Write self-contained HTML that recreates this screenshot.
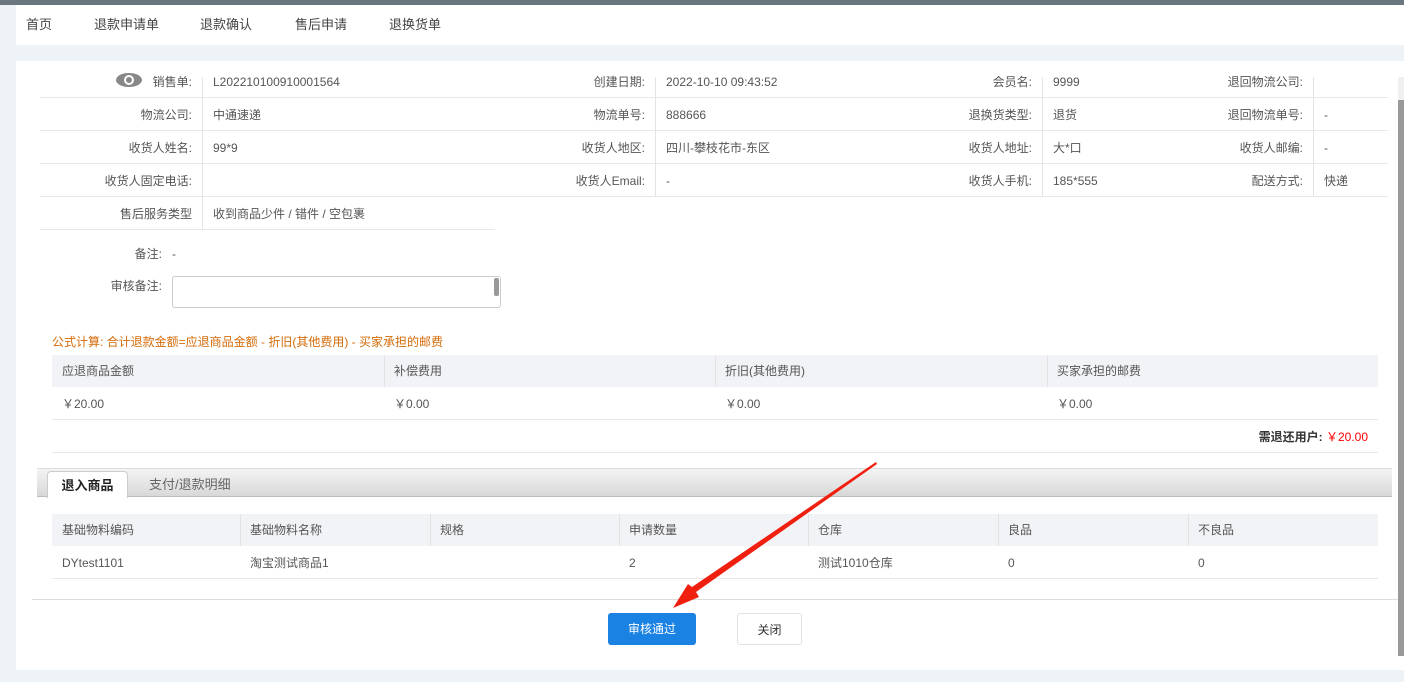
<!DOCTYPE html>
<html><head><meta charset="utf-8"><style>
*{margin:0;padding:0;box-sizing:border-box}
body{width:1404px;height:682px;overflow:hidden;background:#edf3f7;font-family:"Liberation Sans","Noto Sans CJK SC",sans-serif;font-size:12px;color:#555;position:relative}
.a{position:absolute;white-space:nowrap;line-height:16px}
.t{height:16px;line-height:16px}
.l{text-align:right}
.hl{position:absolute;height:1px;background:#e8e8e8}
.vl{position:absolute;width:1px;background:#e3e3e3}
</style></head><body>
<div class="a" style="left:0;top:0;width:1404px;height:5px;background:#6b777f"></div>
<div class="a" style="left:16px;top:5px;width:1388px;height:40px;background:#fff"></div>
<div class="a" style="left:26px;top:17px;font-size:13px;color:#444">首页</div>
<div class="a" style="left:94px;top:17px;font-size:13px;color:#444">退款申请单</div>
<div class="a" style="left:200px;top:17px;font-size:13px;color:#444">退款确认</div>
<div class="a" style="left:295px;top:17px;font-size:13px;color:#444">售后申请</div>
<div class="a" style="left:389px;top:17px;font-size:13px;color:#444">退换货单</div>
<div class="a" style="left:16px;top:61px;width:1388px;height:609px;background:#fff"></div>
<div class="a" style="left:1398px;top:77px;width:6px;height:579px;background:#f0f0f0"></div>
<div class="a" style="left:1398px;top:100px;width:6px;height:556px;background:#999"></div>

<div class="hl" style="left:40px;top:97px;width:1348px"></div>
<div class="hl" style="left:40px;top:130px;width:1348px"></div>
<div class="hl" style="left:40px;top:163px;width:1348px"></div>
<div class="hl" style="left:40px;top:196px;width:1348px"></div>
<div class="hl" style="left:40px;top:229px;width:455px"></div>
<div class="vl" style="left:202px;top:77px;height:152px"></div>
<div class="vl" style="left:655px;top:77px;height:119px"></div>
<div class="vl" style="left:1042px;top:77px;height:119px"></div>
<div class="vl" style="left:1313px;top:77px;height:119px"></div>
<div class="a" style="left:116px;top:73px;width:26px;height:14px;border-radius:50%;background:#888"></div>
<div class="a" style="left:124px;top:75px;width:10px;height:10px;border-radius:50%;background:#fff"></div>
<div class="a" style="left:126px;top:77px;width:6px;height:6px;border-radius:50%;background:#888"></div>

<div class="a l" style="right:1212px;top:74px">销售单:</div><div class="a" style="left:213px;top:74px">L202210100910001564</div>
<div class="a l" style="right:759px;top:74px">创建日期:</div><div class="a" style="left:666px;top:74px">2022-10-10 09:43:52</div>
<div class="a l" style="right:372px;top:74px">会员名:</div><div class="a" style="left:1053px;top:74px">9999</div>
<div class="a l" style="right:101px;top:74px">退回物流公司:</div>

<div class="a l" style="right:1212px;top:107px">物流公司:</div><div class="a" style="left:213px;top:107px">中通速递</div>
<div class="a l" style="right:759px;top:107px">物流单号:</div><div class="a" style="left:666px;top:107px">888666</div>
<div class="a l" style="right:372px;top:107px">退换货类型:</div><div class="a" style="left:1053px;top:107px">退货</div>
<div class="a l" style="right:101px;top:107px">退回物流单号:</div><div class="a" style="left:1324px;top:107px">-</div>

<div class="a l" style="right:1212px;top:140px">收货人姓名:</div><div class="a" style="left:213px;top:140px">99*9</div>
<div class="a l" style="right:759px;top:140px">收货人地区:</div><div class="a" style="left:666px;top:140px">四川-攀枝花市-东区</div>
<div class="a l" style="right:372px;top:140px">收货人地址:</div><div class="a" style="left:1053px;top:140px">大*口</div>
<div class="a l" style="right:101px;top:140px">收货人邮编:</div><div class="a" style="left:1324px;top:140px">-</div>

<div class="a l" style="right:1212px;top:173px">收货人固定电话:</div>
<div class="a l" style="right:759px;top:173px">收货人Email:</div><div class="a" style="left:666px;top:173px">-</div>
<div class="a l" style="right:372px;top:173px">收货人手机:</div><div class="a" style="left:1053px;top:173px">185*555</div>
<div class="a l" style="right:101px;top:173px">配送方式:</div><div class="a" style="left:1324px;top:173px">快递</div>

<div class="a l" style="right:1212px;top:206px">售后服务类型</div><div class="a" style="left:213px;top:206px">收到商品少件 / 错件 / 空包裹</div>

<div class="a l" style="right:1242px;top:246px">备注:</div><div class="a" style="left:172px;top:246px">-</div>
<div class="a l" style="right:1242px;top:278px">审核备注:</div>
<div class="a" style="left:172px;top:276px;width:329px;height:32px;border:1px solid #ccc;border-radius:3px"></div>
<div class="a" style="left:494px;top:278px;width:5px;height:18px;background:#999;border-radius:2px"></div>

<div class="a" style="left:52px;top:334px;color:#d46b08">公式计算: 合计退款金额=应退商品金额 - 折旧(其他费用) - 买家承担的邮费</div>
<div class="a" style="left:52px;top:355px;width:1326px;height:32px;background:#f2f3f6"></div>
<div class="vl" style="left:384px;top:355px;height:32px"></div>
<div class="vl" style="left:715px;top:355px;height:32px"></div>
<div class="vl" style="left:1047px;top:355px;height:32px"></div>
<div class="a" style="left:62px;top:363px">应退商品金额</div>
<div class="a" style="left:394px;top:363px">补偿费用</div>
<div class="a" style="left:725px;top:363px">折旧(其他费用)</div>
<div class="a" style="left:1057px;top:363px">买家承担的邮费</div>
<div class="a" style="left:62px;top:396px">￥20.00</div>
<div class="a" style="left:394px;top:396px">￥0.00</div>
<div class="a" style="left:725px;top:396px">￥0.00</div>
<div class="a" style="left:1057px;top:396px">￥0.00</div>
<div class="hl" style="left:52px;top:419px;width:1326px"></div>
<div class="a" style="right:36px;top:429px;color:#333;font-weight:bold">需退还用户: <span style="color:#f00;font-weight:normal">￥20.00</span></div>
<div class="hl" style="left:52px;top:452px;width:1326px"></div>

<div class="a" style="left:37px;top:468px;width:1355px;height:29px;background:linear-gradient(#f4f4f4,#d8d8d8);border-top:1px solid #ddd;border-bottom:1px solid #bbb"></div>
<div class="a" style="left:47px;top:471px;width:81px;height:27px;background:#fff;border:1px solid #ccc;border-bottom:none;border-radius:4px 4px 0 0;font-size:13px;font-weight:bold;color:#222;text-align:center;line-height:27px">退入商品</div>
<div class="a" style="left:149px;top:477px;font-size:13px;color:#666">支付/退款明细</div>

<div class="a" style="left:52px;top:514px;width:1326px;height:32px;background:#f2f3f6"></div>
<div class="vl" style="left:240px;top:514px;height:32px"></div>
<div class="vl" style="left:430px;top:514px;height:32px"></div>
<div class="vl" style="left:619px;top:514px;height:32px"></div>
<div class="vl" style="left:808px;top:514px;height:32px"></div>
<div class="vl" style="left:998px;top:514px;height:32px"></div>
<div class="vl" style="left:1188px;top:514px;height:32px"></div>
<div class="a" style="left:62px;top:522px">基础物料编码</div>
<div class="a" style="left:250px;top:522px">基础物料名称</div>
<div class="a" style="left:440px;top:522px">规格</div>
<div class="a" style="left:629px;top:522px">申请数量</div>
<div class="a" style="left:818px;top:522px">仓库</div>
<div class="a" style="left:1008px;top:522px">良品</div>
<div class="a" style="left:1198px;top:522px">不良品</div>
<div class="a" style="left:62px;top:555px">DYtest1101</div>
<div class="a" style="left:250px;top:555px">淘宝测试商品1</div>
<div class="a" style="left:629px;top:555px">2</div>
<div class="a" style="left:818px;top:555px">测试1010仓库</div>
<div class="a" style="left:1008px;top:555px">0</div>
<div class="a" style="left:1198px;top:555px">0</div>
<div class="hl" style="left:52px;top:578px;width:1326px"></div>
<div class="hl" style="left:32px;top:599px;width:1366px;background:#ddd"></div>

<div class="a" style="left:608px;top:613px;width:88px;height:32px;background:#1a82e2;border-radius:3px;color:#fff;text-align:center;line-height:32px">审核通过</div>
<div class="a" style="left:737px;top:613px;width:65px;height:32px;border:1px solid #e3e3e3;border-radius:3px;color:#333;text-align:center;line-height:32px">关闭</div>

<svg class="a" style="left:0;top:0" width="1404" height="682"><polygon points="876,462 877,464 696,592 699,597 673,608 688,584 692,587" fill="#f02010"/></svg>
</body></html>
